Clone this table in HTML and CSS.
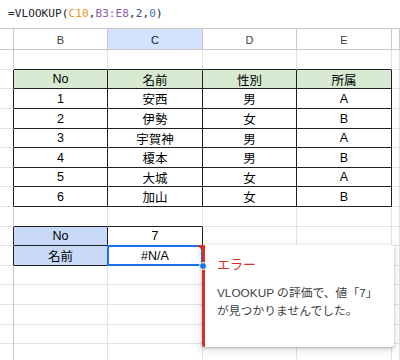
FILE: index.html
```html
<!DOCTYPE html>
<html lang="ja">
<head>
<meta charset="utf-8">
<link rel="stylesheet" href="styles.css">
</head>
<body>
<div class="formula"><span>=VLOOKUP(</span><span class="ref1">C10</span><span>,</span><span class="ref2">B3:E8</span><span>,</span><span class="num2">2</span><span>,</span><span class="num0">0</span><span>)</span></div>
<div class="sheet">
  <!-- column headers -->
  <div class="c ch"></div><div class="c ch">B</div><div class="c ch sel">C</div><div class="c ch">D</div><div class="c ch">E</div><div class="c ch"></div>
  <!-- row 1 -->
  <div class="c rh"></div><div class="c bb"></div><div class="c bb"></div><div class="c bb"></div><div class="c bb"></div><div class="c"></div>
  <!-- row 2 header -->
  <div class="c rh br"></div><div class="c t th">No</div><div class="c t th">名前</div><div class="c t th">性別</div><div class="c t th">所属</div><div class="c"></div>
  <!-- rows 3-8 -->
  <div class="c rh br"></div><div class="c t">1</div><div class="c t">安西</div><div class="c t">男</div><div class="c t">A</div><div class="c"></div>
  <div class="c rh br"></div><div class="c t">2</div><div class="c t">伊勢</div><div class="c t">女</div><div class="c t">B</div><div class="c"></div>
  <div class="c rh br"></div><div class="c t">3</div><div class="c t">宇賀神</div><div class="c t">男</div><div class="c t">A</div><div class="c"></div>
  <div class="c rh br"></div><div class="c t">4</div><div class="c t">榎本</div><div class="c t">男</div><div class="c t">B</div><div class="c"></div>
  <div class="c rh br"></div><div class="c t">5</div><div class="c t">大城</div><div class="c t">女</div><div class="c t">A</div><div class="c"></div>
  <div class="c rh br"></div><div class="c t">6</div><div class="c t">加山</div><div class="c t">女</div><div class="c t">B</div><div class="c"></div>
  <!-- row 9 -->
  <div class="c rh"></div><div class="c bb"></div><div class="c bb"></div><div class="c"></div><div class="c"></div><div class="c"></div>
  <!-- row 10 -->
  <div class="c rh br"></div><div class="c t lbl">No</div><div class="c t">7</div><div class="c"></div><div class="c"></div><div class="c"></div>
  <!-- row 11 -->
  <div class="c rh br"></div><div class="c t lbl">名前</div><div class="c t active">#N/A<span class="err-mark"></span><span class="handle"></span></div><div class="c"></div><div class="c"></div><div class="c"></div>
  <!-- rows 12-16 -->
  <div class="c rh"></div><div class="c"></div><div class="c"></div><div class="c"></div><div class="c"></div><div class="c"></div>
  <div class="c rh"></div><div class="c"></div><div class="c"></div><div class="c"></div><div class="c"></div><div class="c"></div>
  <div class="c rh"></div><div class="c"></div><div class="c"></div><div class="c"></div><div class="c"></div><div class="c"></div>
  <div class="c rh"></div><div class="c"></div><div class="c"></div><div class="c"></div><div class="c"></div><div class="c"></div>
  <div class="c rh"></div><div class="c"></div><div class="c"></div><div class="c"></div><div class="c"></div><div class="c"></div>
</div>
<div class="tooltip">
  <div class="tt-title">エラー</div>
  <div class="tt-body">VLOOKUP の評価で、値「7」<br>が見つかりませんでした。</div>
</div>
</body>
</html>
```
FILE: styles.css
```css
html, body {
  margin: 0;
  padding: 0;
  background: #fff;
  overflow: hidden;
}
body {
  width: 400px;
  height: 360px;
  position: relative;
  font-family: "Liberation Sans", "Noto Sans CJK JP", sans-serif;
}
.formula {
  height: 28px;
  box-sizing: border-box;
  padding: 7px 0 0 8px;
  font-family: "DejaVu Sans Mono", "Liberation Mono", monospace;
  font-size: 11px;
  letter-spacing: 0.1px;
  line-height: 14px;
  color: #202124;
  white-space: nowrap;
}
.ref1 { color: #e8951c; }
.ref2 { color: #8a5bb0; }
.num2 { color: #3d4a8a; }
.num0 { color: #3f6cc9; }

.sheet {
  display: grid;
  grid-template-columns: 14px 94px 95px 94px 95px 1fr;
  grid-template-rows: 22px 20px 19px 20px 20px 19px 20px 19px 20px 20px 19px 20px 19px 20px 20px 19px 20px;
}
.c {
  box-sizing: border-box;
  border-right: 1px solid #e2e2e2;
  border-bottom: 1px solid #e2e2e2;
  display: flex;
  align-items: center;
  justify-content: center;
  font-size: 12.5px;
  color: #000;
  position: relative;
}
.ch {
  border-top: 1px solid #c7c7c7;
  border-bottom: 1px solid #c7c7c7;
  border-right: 1px solid #c7c7c7;
  font-size: 11px;
  color: #3c3c3c;
  padding-top: 1px;
}
.ch.sel {
  background: #d3e3fd;
  color: #0b1e3f;
}
.rh {
  border-right: 1px solid #c7c7c7;
}
.rh.br {
  border-right-color: #1f1f1f;
}
.bb {
  border-bottom-color: #1f1f1f;
}
.t {
  border-right-color: #1f1f1f;
  border-bottom-color: #1f1f1f;
}
.th {
  background: #d9ead3;
}
.lbl {
  background: #c9daf8;
}
.active::after {
  content: "";
  position: absolute;
  left: -1px;
  top: -1px;
  right: -1px;
  bottom: -1px;
  border: 2px solid #1a73e8;
  pointer-events: none;
}
.err-mark {
  position: absolute;
  right: -1px;
  top: -1px;
  width: 0;
  height: 0;
  border-top: 6px solid #d93025;
  border-left: 6px solid transparent;
  z-index: 2;
}
.handle {
  position: absolute;
  right: -5px;
  bottom: -5px;
  width: 6px;
  height: 6px;
  border-radius: 50%;
  background: #1a73e8;
  border: 1px solid #fff;
  z-index: 3;
}
.tooltip {
  position: absolute;
  left: 202px;
  top: 245px;
  width: 192px;
  height: 102px;
  box-sizing: border-box;
  background: #fff;
  border-left: 3px solid #d93025;
  border-radius: 3px;
  box-shadow: 0 1px 2px rgba(60,64,67,0.3), 0 2px 6px 2px rgba(60,64,67,0.15);
  padding: 11px 8px 0 12px;
  z-index: 2;
}
.tt-title {
  font-size: 13px;
  line-height: 18px;
  color: #d93025;
}
.tt-body {
  margin-top: 10px;
  font-size: 11.8px;
  line-height: 18px;
  color: #3c4043;
  white-space: nowrap;
}
```
